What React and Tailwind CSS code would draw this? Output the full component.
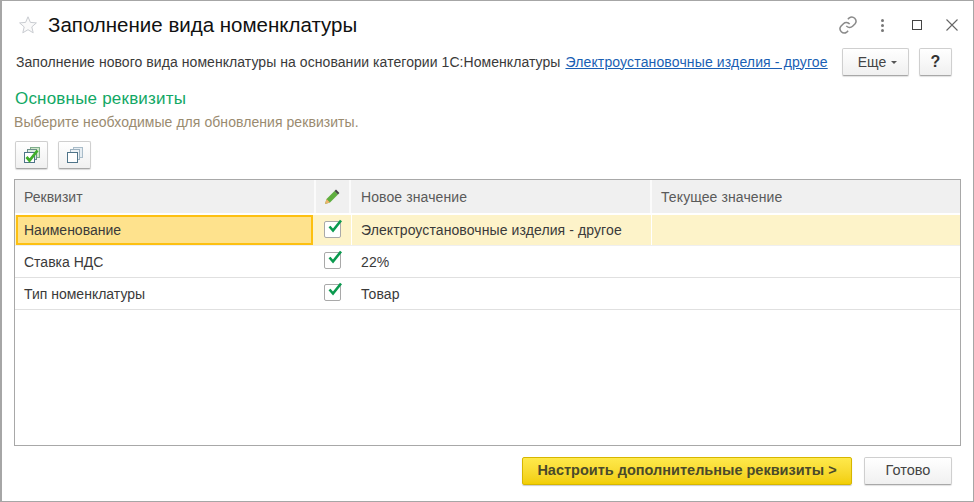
const font = { fontFamily: '"Liberation Sans", Arial, sans-serif' };

function Check() {
  return (
    <span className="relative block w-[17px] h-[17px] rounded-[2px] border border-[#a9a9a9] bg-white">
      <svg className="absolute left-[2px] top-[-4px]" width="16" height="16" viewBox="0 0 16 16">
        <path d="M2.5 8.5 L6 12.5 L14 2.5" fill="none" stroke="#0b9a4f" strokeWidth="2.6" />
      </svg>
    </span>
  );
}

function Row({ name, value, active }) {
  return (
    <div className={`flex shrink-0 border-b ${active ? "h-[31px] bg-[#fdf3c9] border-[#efefef]" : "h-[32px] border-[#e0e0e0]"} text-[#3a3a3a]`}>
      <div className={`shrink-0 flex items-center pt-[1px] ${active ? "w-[297px] bg-[#fee28d] border-2 border-[#fdc011] pl-[6px] ml-[1px] mr-[1px]" : "w-[299px] pl-[9px]"}`}>{name}</div>
      <div className="w-[37px] shrink-0 flex items-center justify-center pb-[2px]"><Check /></div>
      <div className={`w-[300px] shrink-0 flex items-center pl-[9px] pt-[1px] tracking-[0.1px] border-l ${active ? "border-white" : "border-transparent"}`}>{value}</div>
      <div className={`flex-1 border-l ${active ? "border-white" : "border-transparent"}`} />
    </div>
  );
}

function Stack({ checked }) {
  return (
    <svg width="18" height="18" viewBox="0 0 18 18">
      <rect x="7.5" y="1.5" width="9" height="10" fill={checked ? "#cfe8c8" : "#e6edf2"} stroke={checked ? "#7fae8c" : "#a9bcc9"} />
      <rect x="4.5" y="3.5" width="9" height="10" fill={checked ? "#dcebe0" : "#eef3f6"} stroke={checked ? "#6c8f8a" : "#9db1bf"} />
      <rect x="1.5" y="6.5" width="10" height="10" fill="#fff" stroke="#4f7489" />
      {checked && <path d="M3.5 11 L6.5 14.5 L14.5 4.5" fill="none" stroke="#3fae2a" strokeWidth="2.8" />}
    </svg>
  );
}

function SmallBtn({ children }) {
  return (
    <button className="w-[33px] h-[28px] flex items-center justify-center rounded-[2px] border border-[#cfcfcf] border-b-[#a8a8a8] bg-gradient-to-b from-white to-[#f0f0f0] shadow-[0_1px_1px_rgba(0,0,0,0.15)]">
      {children}
    </button>
  );
}

export default function App() {
  return (
    <div style={font} className="w-[974px] h-[502px] bg-white border border-[#a6a6a6] border-l-2 flex flex-col text-[14px] overflow-hidden">
      <div className="h-[47px] shrink-0 flex items-center pl-[16px] pr-[15px] pt-[1px]">
        <svg width="20" height="20" viewBox="0 0 20 20" className="mr-[10px]">
          <path d="M10 1.8 L12.4 7.4 L18.4 7.9 L13.8 11.9 L15.2 17.8 L10 14.7 L4.8 17.8 L6.2 11.9 L1.6 7.9 L7.6 7.4 Z" fill="#fafafa" stroke="#c9ccd1" strokeWidth="1" />
        </svg>
        <div className="text-[20.5px] text-[#111] flex-1">Заполнение вида номенклатуры</div>
        <div className="flex items-center">
          <svg width="20" height="20" viewBox="0 0 24 24" fill="none" stroke="#8a8a8a" strokeWidth="1.8" className="mr-[23px]">
            <path d="M10 13a5 5 0 0 0 7.5.5l3-3a5 5 0 0 0-7-7l-1.7 1.7" />
            <path d="M14 11a5 5 0 0 0-7.5-.5l-3 3a5 5 0 0 0 7 7l1.7-1.7" />
          </svg>
          <div className="flex flex-col gap-[2px] mr-[28px]">
            <span className="w-[3px] h-[3px] bg-[#777] rounded-full" />
            <span className="w-[3px] h-[3px] bg-[#777] rounded-full" />
            <span className="w-[3px] h-[3px] bg-[#777] rounded-full" />
          </div>
          <span className="w-[10px] h-[10px] border-[1.5px] border-[#444] mr-[24px]" />
          <svg width="12" height="12" viewBox="0 0 12 12" stroke="#666" strokeWidth="1.1"><path d="M0.5 0.5 L11.5 11.5 M11.5 0.5 L0.5 11.5" /></svg>
        </div>
      </div>

      <div className="flex items-center h-[28px] shrink-0 pl-[14px] pr-[21px] text-[#3a3a3a] tracking-[0.06px]">
        <span>Заполнение нового вида номенклатуры на основании категории 1С:Номенклатуры</span>
        <a className="ml-[5px] text-[#1a5fb4] underline tracking-[0.14px]">Электроустановочные изделия - другое</a>
        <button className="ml-auto w-[67px] h-[28px] rounded-[2px] border border-[#cfcfcf] border-b-[#a8a8a8] bg-gradient-to-b from-white to-[#f0f0f0] text-[14px] text-[#444] flex items-center justify-center gap-[5px] pl-[4px] shadow-[0_1px_1px_rgba(0,0,0,0.12)]">
          Еще
          <span className="w-0 h-0 border-x-[3px] border-x-transparent border-t-[3px] border-t-[#555]" />
        </button>
        <button className="ml-[10px] w-[33px] h-[28px] rounded-[2px] border border-[#cfcfcf] border-b-[#a8a8a8] bg-gradient-to-b from-white to-[#f0f0f0] text-[16px] font-bold text-[#333] shadow-[0_1px_1px_rgba(0,0,0,0.12)]">?</button>
      </div>

      <div className="pl-[13px] mt-[13px] text-[17px] tracking-[0.2px] leading-[20px] text-[#12a865]">Основные реквизиты</div>
      <div className="pl-[12px] mt-[5px] leading-[16px] text-[#9a8b70] tracking-[0.06px]">Выберите необходимые для обновления реквизиты.</div>

      <div className="flex gap-[10px] pl-[13px] mt-[11px]">
        <SmallBtn><Stack checked /></SmallBtn>
        <SmallBtn><Stack /></SmallBtn>
      </div>

      <div className="mx-[12px] mt-[10px] h-[267px] shrink-0 border border-[#a8a8a8] flex flex-col">
        <div className="flex h-[35px] shrink-0 bg-[#f0f0f0] border-b-2 border-white text-[#5a5a5a]">
          <div className="w-[299px] shrink-0 flex items-center pl-[9px] pt-[2px]">Реквизит</div>
          <div className="w-[37px] shrink-0 flex items-center justify-center border-x-2 border-[#fbfbfb]">
            <svg width="16" height="16" viewBox="0 0 16 16" className="mr-[1px]">
              <path d="M1 15 L2.5 10 L10.5 2 L14 5.5 L6 13.5 Z" fill="#5fae3f" />
              <path d="M10.5 2 L12 .6 L15.4 4 L14 5.5 Z" fill="#444" />
              <path d="M1 15 L2.5 10 L6 13.5 Z" fill="#eeb26b" />
            </svg>
          </div>
          <div className="w-[299px] shrink-0 flex items-center pl-[10px] pt-[2px] tracking-[0.1px]">Новое значение</div>
          <div className="flex-1 flex items-center pl-[9px] pt-[2px] tracking-[0.1px] border-l-2 border-[#fbfbfb]">Текущее значение</div>
        </div>
        <Row active name="Наименование" value="Электроустановочные изделия - другое" />
        <Row name="Ставка НДС" value="22%" />
        <Row name="Тип номенклатуры" value="Товар" />
      </div>

      <div className="flex justify-end gap-[12px] pr-[21px] mt-[11px]">
        <button className="w-[330px] h-[28px] rounded-[2px] border border-[#d6b600] bg-gradient-to-b from-[#ffe94a] to-[#f2ce00] text-[14.5px] font-bold text-[#4a4a2a] shadow-[0_1px_1px_rgba(0,0,0,0.2)]">Настроить дополнительные реквизиты &gt;</button>
        <button className="w-[88px] h-[28px] rounded-[2px] border border-[#cfcfcf] border-b-[#a8a8a8] bg-gradient-to-b from-white to-[#f0f0f0] text-[14.5px] text-[#444] shadow-[0_1px_1px_rgba(0,0,0,0.12)]">Готово</button>
      </div>
    </div>
  );
}
